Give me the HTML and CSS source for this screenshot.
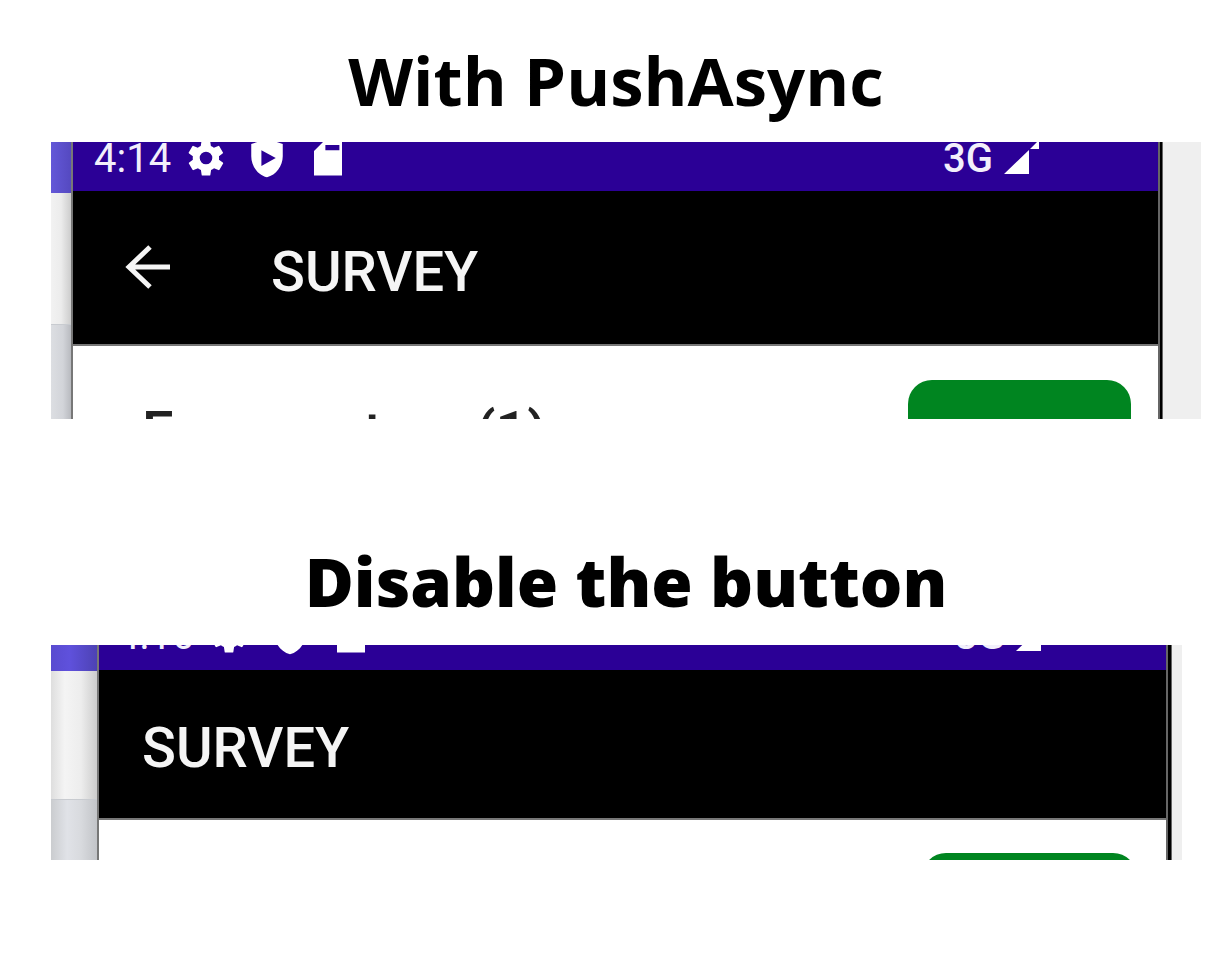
FILE: index.html
```html
<!DOCTYPE html>
<html lang="en">
<head>
<meta charset="utf-8">
<meta name="viewport" content="width=device-width, initial-scale=1">
<title>Survey navigation bar</title>
<link rel="stylesheet" href="styles.css">
</head>
<body>
<svg class="defs" aria-hidden="true">
  <symbol id="gear" viewBox="0 0 24 24"><path d="M19.400 13a7.500 7.500 0 0 0 0-2l2.100-1.600a.5.5 0 0 0 .1-.7l-2-3.400a.5.5 0 0 0-.6-.2l-2.500 1a7.300 7.300 0 0 0-1.700-1l-.4-2.600a.5.5 0 0 0-.5-.5h-4a.5.5 0 0 0-.5.5L9 5.100a7.700 7.700 0 0 0-1.700 1l-2.500-1a.5.5 0 0 0-.6.2l-2 3.400a.5.5 0 0 0 .1.7L4.500 11a7.900 7.900 0 0 0 0 2l-2.100 1.600a.5.5 0 0 0-.1.7l2 3.400c.1.200.4.300.6.200l2.500-1c.5.400 1.100.7 1.700 1l.4 2.600c0 .3.200.5.5.5h4c.3 0 .5-.2.500-.5l.4-2.600a7.300 7.300 0 0 0 1.700-1l2.500 1c.2.100.5 0 .6-.2l2-3.400a.5.5 0 0 0-.1-.7zM12 15.600a3.600 3.600 0 1 1 0-7.200 3.600 3.600 0 0 1 0 7.200z"/></symbol>
  <symbol id="shield" viewBox="0 0 24 24"><path fill-rule="evenodd" d="M12 1 3 4v7c0 5.600 3.800 10.700 9 12 5.200-1.300 9-6.400 9-12V4zM8.800 7.500v9L17 12z"/></symbol>
  <symbol id="card" viewBox="0 0 24 24"><path fill-rule="evenodd" d="M20 2H10L4 8v14h16zM10.500 4.500h8v3h-8z"/></symbol>
  <symbol id="signal" viewBox="0 0 36 36"><path d="M1 36h25V12zM27 11h9V2z"/></symbol>
</svg>
<main class="page">
  <section class="example">
    <h1 class="title title-push">With PushAsync</h1>
    <div class="shot shot-push">
      <div class="behind"><div class="behind-bar"></div><div class="behind-head"></div><div class="behind-body"></div></div>
      <div class="phone">
        <div class="status">
          <span class="clock">4:14</span>
          <svg class="icon"><use href="#gear"/></svg>
          <svg class="icon"><use href="#shield"/></svg>
          <svg class="icon"><use href="#card"/></svg>
          <span class="network">3G</span>
          <svg class="signal"><use href="#signal"/></svg>
        </div>
        <header class="appbar">
          <button class="back" type="button" aria-label="Back"><svg class="arrow" viewBox="0 0 46 46"><path d="M45 23H4M25 3 4 23l21 20"/></svg></button>
          <h2 class="heading">SURVEY</h2>
        </header>
        <div class="content">
          <span class="label">Enumerators (1)</span>
          <button class="action" type="button" aria-label="Start"></button>
        </div>
      </div>
      <div class="bezel"></div>
      <div class="backdrop"></div>
    </div>
  </section>
  <section class="example">
    <h1 class="title title-disable">Disable the button</h1>
    <div class="shot shot-disable">
      <div class="behind"><div class="behind-bar"></div><div class="behind-head"></div><div class="behind-body"></div></div>
      <div class="phone">
        <div class="status">
          <span class="clock">4:16</span>
          <svg class="icon"><use href="#gear"/></svg>
          <svg class="icon"><use href="#shield"/></svg>
          <svg class="icon"><use href="#card"/></svg>
          <span class="network">3G</span>
          <svg class="signal"><use href="#signal"/></svg>
        </div>
        <header class="appbar"><h2 class="heading">SURVEY</h2></header>
        <div class="content"><button class="action" type="button" aria-label="Start"></button></div>
      </div>
      <div class="bezel"></div>
      <div class="backdrop"></div>
    </div>
  </section>
</main>
</body>
</html>
```
FILE: styles.css
```css
* { box-sizing: border-box; }
body { margin: 0; background: #fff; font-family: Roboto, sans-serif; }
.defs { display: none; }
.page { display: flex; flex-direction: column; gap: 120px; padding: 38px 31px 116px 51px; }
.title { margin: 0; font: 700 67px/84px "Open Sans", sans-serif; color: #000; text-align: center; }
.title-push { padding: 0 20px 20px 0; }
.title-disable { padding-bottom: 22px; font-weight: 800; }

.shot { display: grid; overflow: hidden; }
.shot-push { grid-template-columns: 22px 1fr 5px 38px; }
.shot-disable { grid-template-columns: 48px 1fr 6px 10px; margin-right: 19px; }

.behind { display: flex; flex-direction: column; border-right: 2px solid #777; }
.behind-bar { height: 51px; background: linear-gradient(90deg, #6358d8, #5549c0); }
.behind-head { height: 131px; background: linear-gradient(90deg, #f2f2f2, #ececec 50%, #ccc); }
.behind-body { flex: 1; border-top: 1px solid #c8cbd0; background: linear-gradient(90deg, #dcdee2, #d2d4d9 60%, #b8babf); }
.shot-disable .behind-bar { height: 26px; background: linear-gradient(90deg, #594bd0, #5f51dc 40%, #4d42b4); }
.shot-disable .behind-head { height: 128px; background: linear-gradient(90deg, #dedede, #f4f4f4 30%, #ededed 65%, #ccc); }
.shot-disable .behind-body { background: linear-gradient(90deg, #cacccf, #e0e2e7 35%, #d8dade 65%, #c2c4c8); }

.phone { min-width: 0; background: #fff; }
.status { display: flex; align-items: flex-end; height: 49px; padding: 0 119px 12px 21px; overflow: hidden; background: #2b0096; color: #f2effb; }
.shot-disable .status { height: 25px; padding: 0 115px 14px 18px; }
.clock, .network { font-size: 40px; line-height: 40px; }
.clock { margin-right: 14px; }
.network { margin-left: auto; margin-right: 10px; font-weight: 500; }
.icon { flex: none; width: 42px; height: 42px; margin-right: 19px; fill: #fff; }
.signal { flex: none; width: 36px; height: 36px; margin-bottom: 5px; fill: #fff; }

.appbar { display: flex; align-items: center; height: 155px; padding: 8px 52px 0; border-bottom: 2px solid #777; background: #000; color: #f5f5f5; }
.shot-disable .appbar { height: 150px; padding: 8px 43px 0; }
.back { width: 46px; height: 46px; margin: 0 100px 10px 0; padding: 0; border: 0; background: none; }
.arrow { display: block; width: 46px; height: 46px; fill: none; stroke: #f5f5f5; stroke-width: 5; }
.heading { margin: 0; font-size: 56px; line-height: 64px; font-weight: 500; }

.content { display: flex; justify-content: space-between; height: 73px; padding: 34px 27px 0 69px; overflow: hidden; }
.label { margin-top: 20px; font-size: 56px; line-height: 64px; font-weight: 500; color: #222; white-space: nowrap; }
.action { flex: none; width: 223px; height: 100px; margin-left: auto; padding: 0; border: 0; border-radius: 24px; background: #008520; }
.shot-disable .content { height: 40px; padding: 33px 29px 0 0; }
.shot-disable .action { width: 215px; }

.bezel { border-left: 2px solid #666; border-right: 1px solid #666; background: #000; }
.backdrop { background: #efefef; }
```
